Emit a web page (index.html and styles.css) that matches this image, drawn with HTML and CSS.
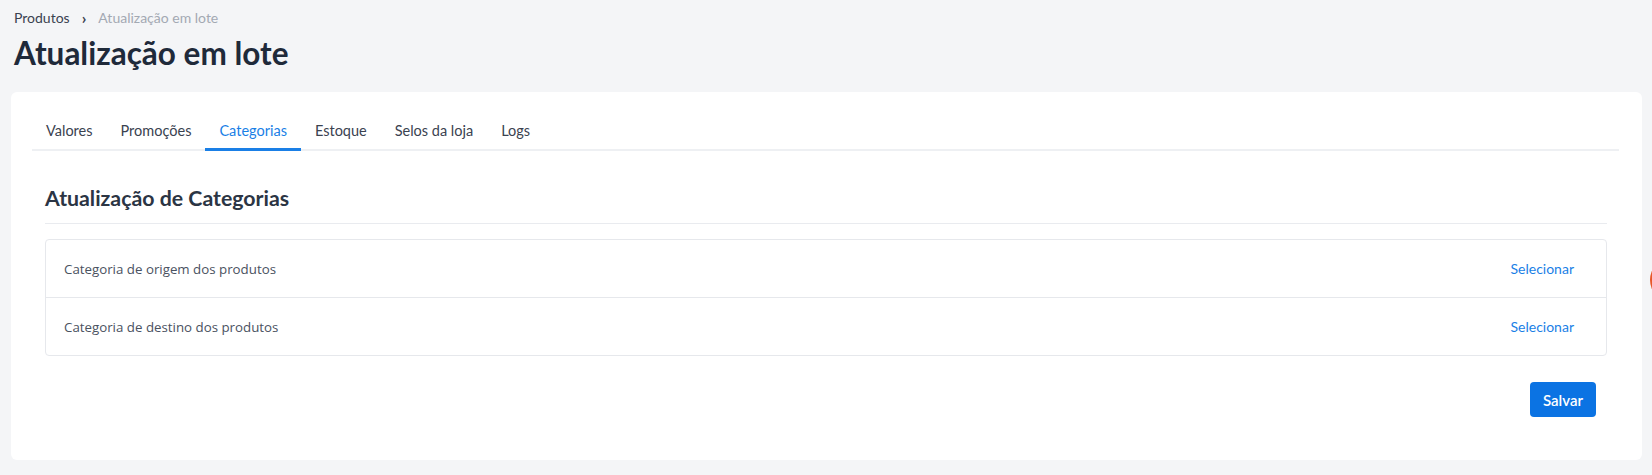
FILE: index.html
```html
<!DOCTYPE html>
<html>
<head>
  <title>Atualização em lote</title>
  <link rel="stylesheet" href="styles.css">
</head>
<body>
  <div class="page-header">
    <div class="breadcrumb">
      <a href="#">Produtos</a>
      <span class="sep">&#8250;</span>
      <span class="current">Atualização em lote</span>
    </div>
    <h1>Atualização em lote</h1>
  </div>

  <div class="card">
    <div class="tabs">
      <a class="tab" href="#">Valores</a>
      <a class="tab" href="#">Promoções</a>
      <a class="tab active" href="#">Categorias</a>
      <a class="tab" href="#">Estoque</a>
      <a class="tab" href="#">Selos da loja</a>
      <a class="tab" href="#">Logs</a>
    </div>

    <div class="section">
      <h2>Atualização de Categorias</h2>

      <div class="list">
        <div class="row">
          <span class="row-label">Categoria de origem dos produtos</span>
          <a href="#" class="select-link">Selecionar</a>
        </div>
        <div class="row">
          <span class="row-label">Categoria de destino dos produtos</span>
          <a href="#" class="select-link">Selecionar</a>
        </div>
      </div>

      <div class="actions">
        <button class="btn-primary">Salvar</button>
      </div>
    </div>
  </div>

  <div class="help-bubble"></div>
</body>
</html>
```

FILE: styles.css
```css
body {
  margin: 0;
  background: #f4f5f7;
  font-family: Lato, "Noto Sans", sans-serif;
  color: #2b3544;
  overflow: hidden;
}
a { text-decoration: none; }

.page-header { padding: 8px 14px 0; }
.breadcrumb { font-size: 14px; line-height: 20px; display: flex; align-items: center; gap: 12px; }
.breadcrumb a { color: #3a4250; }
.breadcrumb .sep { color: #3a4250; font-size: 16px; font-weight: 700; }
.breadcrumb .current { color: #a3a9b3; }
h1 {
  margin: 3px 0 0;
  font-size: 31.5px;
  line-height: 44px;
  font-weight: 700;
  color: #1f2a3a;
  height: 61px;
}

.card {
  margin: 0 10px 0 11px;
  background: #fff;
  border-radius: 6px;
  padding: 19px 23px 43px 21px;
}

.tabs { display: flex; border-bottom: 2px solid #eef0f3; }
.tab {
  padding: 10px 14px 7px;
  line-height: 20px;
  font-size: 14.5px;
  color: #3a4250;
  border-bottom: 3px solid transparent;
  margin-bottom: -2px;
}
.tab.active { color: #1a7fe6; border-bottom-color: #1a7fe6; }

.section { padding: 33px 12px 0 13px; }
h2 {
  margin: 0;
  font-size: 21.3px;
  line-height: 28px;
  font-weight: 700;
  color: #2b3544;
  padding-bottom: 11px;
  border-bottom: 1px solid #e9ebef;
}

.list { margin-top: 15px; border: 1px solid #e6e8ec; border-radius: 4px; }
.row {
  height: 57px;
  display: flex;
  align-items: center;
  justify-content: space-between;
  padding: 0 32px 0 18px;
}
.row + .row { border-top: 1px solid #e6e8ec; }
.row-label { font-family: "Open Sans", sans-serif; font-size: 13.3px; color: #4a5261; }
.select-link { color: #1a7fe6; font-size: 14px; }

.actions { display: flex; justify-content: flex-end; padding: 26px 11px 0 0; }
.btn-primary {
  width: 66px;
  height: 35px;
  border: none;
  border-radius: 4px;
  background: #0b73e3;
  color: #fff;
  font-family: Lato, "Noto Sans", sans-serif;
  font-size: 15px;
  font-weight: 600;
  cursor: pointer;
}

.help-bubble {
  position: fixed;
  top: 258px;
  right: -42px;
  width: 44px;
  height: 44px;
  border-radius: 50%;
  background: #e8582a;
}
```
